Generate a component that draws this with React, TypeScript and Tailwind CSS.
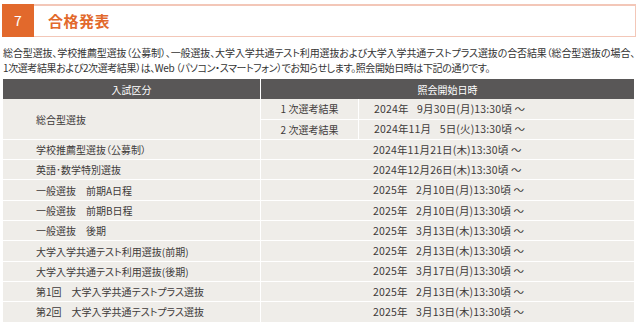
const pad = "\u2007 ";

const rows: { label: string; date: string }[] = [
  { label: "学校推薦型選抜（公募制）", date: "2024年11月21日(木)13:30頃 ～" },
  { label: "英語･数学特別選抜", date: "2024年12月26日(木)13:30頃 ～" },
  { label: "一般選抜　前期A日程", date: `2025年${pad}2月10日(月)13:30頃 ～` },
  { label: "一般選抜　前期B日程", date: `2025年${pad}2月10日(月)13:30頃 ～` },
  { label: "一般選抜　後期", date: `2025年${pad}3月13日(木)13:30頃 ～` },
  { label: "大学入学共通テスト利用選抜(前期)", date: `2025年${pad}2月13日(木)13:30頃 ～` },
  { label: "大学入学共通テスト利用選抜(後期)", date: `2025年${pad}3月17日(月)13:30頃 ～` },
  { label: "第1回　大学入学共通テストプラス選抜", date: `2025年${pad}2月13日(木)13:30頃 ～` },
  { label: "第2回　大学入学共通テストプラス選抜", date: `2025年${pad}3月13日(木)13:30頃 ～` },
];

const cell = "bg-[#efede9] flex items-center text-[#3e3a39]";
const label = "text-[10px]";
const date = "text-[10.5px] tracking-[0.15px] whitespace-pre";

export default function App() {
  return (
    <div className="w-[640px] h-[328px] bg-white overflow-hidden font-['Noto_Sans_CJK_JP',sans-serif] [font-feature-settings:'palt']">
      {/* heading */}
      <div className="mt-1 ml-[2px] w-[634px] h-[33px] flex items-stretch border border-t-2 border-[#f3c7b8]">
        <div className="w-[32px] -mt-[2px] -ml-px -mb-px bg-[#e2692c] text-white text-[14px] flex items-center justify-center">
          7
        </div>
        <h2 className="ml-[14px] flex items-center text-[15px] font-bold text-[#e2692c] tracking-[0.5px]">
          合格発表
        </h2>
      </div>

      {/* description */}
      <p className="mt-[8px] ml-[3px] w-[637px] text-[10px] leading-[15px] text-[#333] tracking-[-0.12px] whitespace-nowrap">
        総合型選抜、学校推薦型選抜（公募制）、一般選抜、大学入学共通テスト利用選抜および大学入学共通テストプラス選抜の合否結果（総合型選抜の場合、
        <br />
        <span className="tracking-[-0.4px]">
          1次選考結果および2次選考結果）は、Web （パソコン・スマートフォン）でお知らせします。照会開始日時は下記の通りです。
        </span>
      </p>

      {/* table */}
      <div className="mt-[4px] ml-[3px] w-[631px] grid grid-cols-[257px_97px_1fr] auto-rows-[19.3px] gap-px bg-white">
        <div className="h-[20px] bg-[#595757] text-white text-[10px] flex items-center justify-center">
          入試区分
        </div>
        <div className="col-span-2 h-[20px] bg-[#595757] text-white text-[10px] flex items-center justify-center">
          照会開始日時
        </div>

        <div className={`${cell} ${label} row-span-2 pl-[33px]`}>総合型選抜</div>
        <div className={`${cell} ${label} justify-center`}>1 次選考結果</div>
        <div className={`${cell} ${date} pl-[15px]`}>2024年{pad}9月30日(月)13:30頃 ～</div>
        <div className={`${cell} ${label} justify-center`}>2 次選考結果</div>
        <div className={`${cell} ${date} pl-[15px]`}>2024年11月{pad}5日(火)13:30頃 ～</div>

        {rows.map((r, i) => (
          <div key={i} className="contents">
            <div className={`${cell} ${label} pl-[33px]`}>{r.label}</div>
            <div className={`${cell} ${date} col-span-2 pl-[112px]`}>{r.date}</div>
          </div>
        ))}
      </div>
    </div>
  );
}
